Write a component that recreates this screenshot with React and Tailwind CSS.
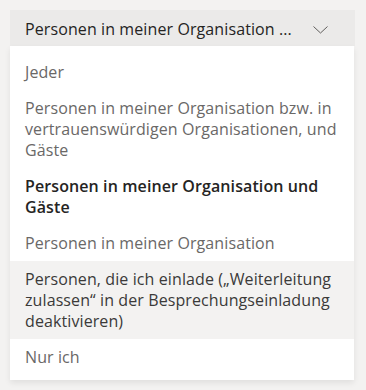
export default function App() {
  const items = [
    { t: "Jeder" },
    { t: "Personen in meiner Organisation bzw. in vertrauenswürdigen Organisationen, und Gäste" },
    { t: "Personen in meiner Organisation und Gäste", bold: true },
    { t: "Personen in meiner Organisation" },
    { t: "Personen, die ich einlade („Weiterleitung zulassen“ in der Besprechungseinladung deaktivieren)", hover: true },
    { t: "Nur ich" },
  ];
  return (
    <div className="w-[366px] h-[390px] bg-[#f3f2f1] pt-[10px] pl-[10px] overflow-hidden" style={{ fontFamily: '"Open Sans", sans-serif' }}>
      <div className="w-[345px] h-[36px] bg-[#ebeae9] flex items-start pt-[9px] pl-[15px] pr-[27px] text-[16px] leading-[21px] tracking-[0.1px] text-[#252423]">
        <span className="flex-1">Personen in meiner Organisation ...</span>
        <svg width="15" height="8" viewBox="0 0 15 8" className="mt-[7px]">
          <path d="M0.5 0.5 L7.5 7 L14.5 0.5" fill="none" stroke="#605e5c" strokeWidth="1" />
        </svg>
      </div>
      <div className="w-[344px] bg-white pt-[8px] pb-[5px] shadow-[0_3px_6px_rgba(0,0,0,0.08)]">
        {items.map((it, i) => (
          <div
            key={i}
            className={
              "pl-[15px] pr-[12px] py-[7.5px] text-[16px] leading-[21px] tracking-[0.1px] " +
              (it.bold ? "font-semibold text-[#252423] " : it.hover ? "text-[#3b3a39] " : "text-[#6a6867] ") +
              (it.hover ? "bg-[#f3f2f1]" : "")
            }
          >
            {it.t}
          </div>
        ))}
      </div>
    </div>
  );
}
